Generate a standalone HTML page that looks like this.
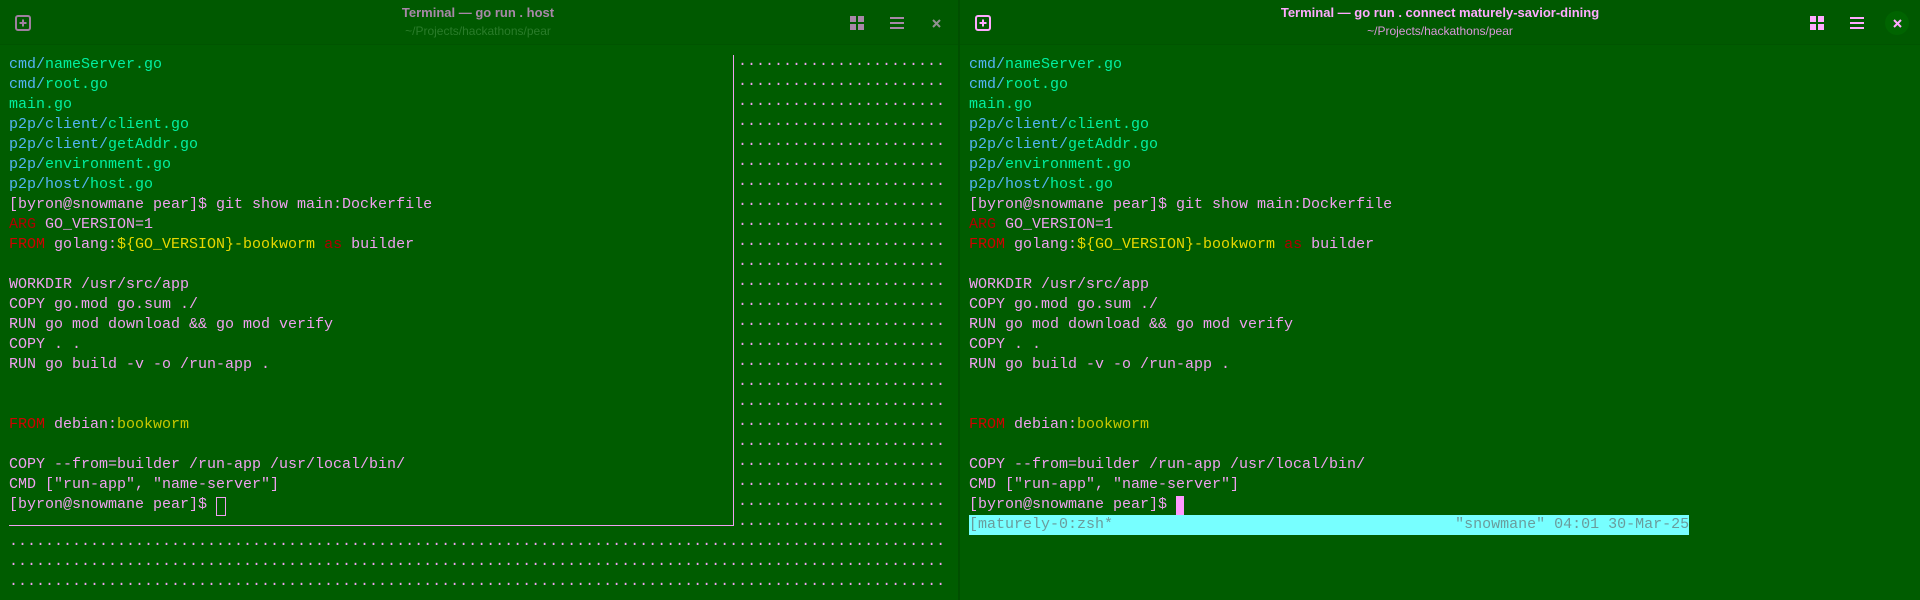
<!DOCTYPE html>
<html><head><meta charset="utf-8"><style>
*{margin:0;padding:0;box-sizing:border-box}
body{width:1920px;height:600px;background:#005c00;overflow:hidden;position:relative;font-family:"Liberation Mono",monospace}
.pane{position:absolute;top:0;height:600px;width:959px;background:#005c00}
.hdr{position:absolute;left:0;top:0;width:100%;height:45px;background:#005900;border-bottom:1px solid #005400}
.t1{position:absolute;left:0;width:100%;top:5px;text-align:center;font:bold 13px "Liberation Sans",sans-serif}
.t2{position:absolute;left:0;width:100%;top:24px;text-align:center;font:12px "Liberation Sans",sans-serif}
pre{position:absolute;left:9px;top:55px;font:15px/20px "Liberation Mono",monospace;color:#f0a0f0;white-space:pre}
.d{color:#55b4f5}.f{color:#00f0a0}.r{color:#b00000}.R{color:#d00000}.y{color:#e8d800}.g{color:#c8c800}
.ic{position:absolute}
</style></head><body>
<div class="pane" style="left:0">
 <div class="hdr">
  <svg class="ic" style="left:15px;top:15px" width="16" height="16"><rect x="1" y="1" width="14" height="14" rx="2" fill="none" stroke="#a080a0" stroke-width="2"/><path d="M8 4.5v7M4.5 8h7" stroke="#a080a0" stroke-width="2"/></svg>
  <div class="t1" style="color:#a888a8;width:956px">Terminal — go run . host</div>
  <div class="t2" style="color:#2a7c2a;width:956px">~/Projects/hackathons/pear</div>
  <svg class="ic" style="left:850px;top:16px" width="14" height="14"><rect x="0" y="0" width="6" height="6" fill="#a888a8"/><rect x="8" y="0" width="6" height="6" fill="#a888a8"/><rect x="0" y="8" width="6" height="6" fill="#a888a8"/><rect x="8" y="8" width="6" height="6" fill="#a888a8"/></svg>
  <svg class="ic" style="left:890px;top:17px" width="14" height="12"><path d="M0 1h14M0 6h14M0 11h14" stroke="#a888a8" stroke-width="2"/></svg>
  <svg class="ic" style="left:932px;top:19px" width="9" height="9"><path d="M1 1l7 7M8 1l-7 7" stroke="#909090" stroke-width="2"/></svg>
 </div>
<pre><span class="d">cmd/</span><span class="f">nameServer.go</span>
<span class="d">cmd/</span><span class="f">root.go</span>
<span class="f">main.go</span>
<span class="d">p2p/client/</span><span class="f">client.go</span>
<span class="d">p2p/client/</span><span class="f">getAddr.go</span>
<span class="d">p2p/</span><span class="f">environment.go</span>
<span class="d">p2p/host/</span><span class="f">host.go</span>
[byron@snowmane pear]$ git show main:Dockerfile
<span class="r">ARG</span> GO_VERSION=1
<span class="R">FROM</span> golang:<span class="y">${GO_VERSION}-bookworm</span> <span class="r">as</span> builder

WORKDIR /usr/src/app
COPY go.mod go.sum ./
RUN go mod download &amp;&amp; go mod verify
COPY . .
RUN go build -v -o /run-app .


<span class="R">FROM</span> debian:<span class="g">bookworm</span>

COPY --from=builder /run-app /usr/local/bin/
CMD ["run-app", "name-server"]
[byron@snowmane pear]$ </pre>
 <div style="position:absolute;left:216px;top:497px;width:10px;height:19px;border:1px solid #f0a0f0"></div>
 <div style="position:absolute;left:733px;top:55px;width:1px;height:471px;background:#f0a0f0"></div>
 <div style="position:absolute;left:9px;top:525px;width:725px;height:1px;background:#f0a0f0"></div>
<pre style="left:738px;color:#f0a0f0">·······················
·······················
·······················
·······················
·······················
·······················
·······················
·······················
·······················
·······················
·······················
·······················
·······················
·······················
·······················
·······················
·······················
·······················
·······················
·······················
·······················
·······················
·······················
·······················</pre>
<pre style="top:535px">········································································································
········································································································
········································································································</pre>
</div>
<div style="position:absolute;left:958px;top:0;width:2px;height:600px;background:#004f00"></div>
<div class="pane" style="left:960px;width:960px">
 <div class="hdr">
  <svg class="ic" style="left:15px;top:15px" width="16" height="16"><rect x="1" y="1" width="14" height="14" rx="2" fill="none" stroke="#ffaaff" stroke-width="2"/><path d="M8 4.5v7M4.5 8h7" stroke="#ffaaff" stroke-width="2"/></svg>
  <div class="t1" style="color:#ffaaff">Terminal — go run . connect maturely-savior-dining</div>
  <div class="t2" style="color:#d898d8">~/Projects/hackathons/pear</div>
  <svg class="ic" style="left:850px;top:16px" width="14" height="14"><rect x="0" y="0" width="6" height="6" fill="#ffaaff"/><rect x="8" y="0" width="6" height="6" fill="#ffaaff"/><rect x="0" y="8" width="6" height="6" fill="#ffaaff"/><rect x="8" y="8" width="6" height="6" fill="#ffaaff"/></svg>
  <svg class="ic" style="left:890px;top:17px" width="14" height="12"><path d="M0 1h14M0 6h14M0 11h14" stroke="#ffaaff" stroke-width="2"/></svg>
  <div style="position:absolute;left:925px;top:11px;width:24px;height:24px;border-radius:50%;background:#006400"></div>
  <svg class="ic" style="left:933px;top:19px" width="9" height="9"><path d="M1 1l7 7M8 1l-7 7" stroke="#ffaaff" stroke-width="2"/></svg>
 </div>
<pre><span class="d">cmd/</span><span class="f">nameServer.go</span>
<span class="d">cmd/</span><span class="f">root.go</span>
<span class="f">main.go</span>
<span class="d">p2p/client/</span><span class="f">client.go</span>
<span class="d">p2p/client/</span><span class="f">getAddr.go</span>
<span class="d">p2p/</span><span class="f">environment.go</span>
<span class="d">p2p/host/</span><span class="f">host.go</span>
[byron@snowmane pear]$ git show main:Dockerfile
<span class="r">ARG</span> GO_VERSION=1
<span class="R">FROM</span> golang:<span class="y">${GO_VERSION}-bookworm</span> <span class="r">as</span> builder

WORKDIR /usr/src/app
COPY go.mod go.sum ./
RUN go mod download &amp;&amp; go mod verify
COPY . .
RUN go build -v -o /run-app .


<span class="R">FROM</span> debian:<span class="g">bookworm</span>

COPY --from=builder /run-app /usr/local/bin/
CMD ["run-app", "name-server"]
[byron@snowmane pear]$ </pre>
 <div style="position:absolute;left:216px;top:496px;width:8px;height:20px;background:#ff99ff"></div>
 <div style="position:absolute;left:9px;top:515px;width:720px;height:20px;background:#77ffff"></div>
<pre style="top:515px;color:#6a9c9c">[maturely-0:zsh*                                      "snowmane" 04:01 30-Mar-25</pre>
</div>
</body></html>
